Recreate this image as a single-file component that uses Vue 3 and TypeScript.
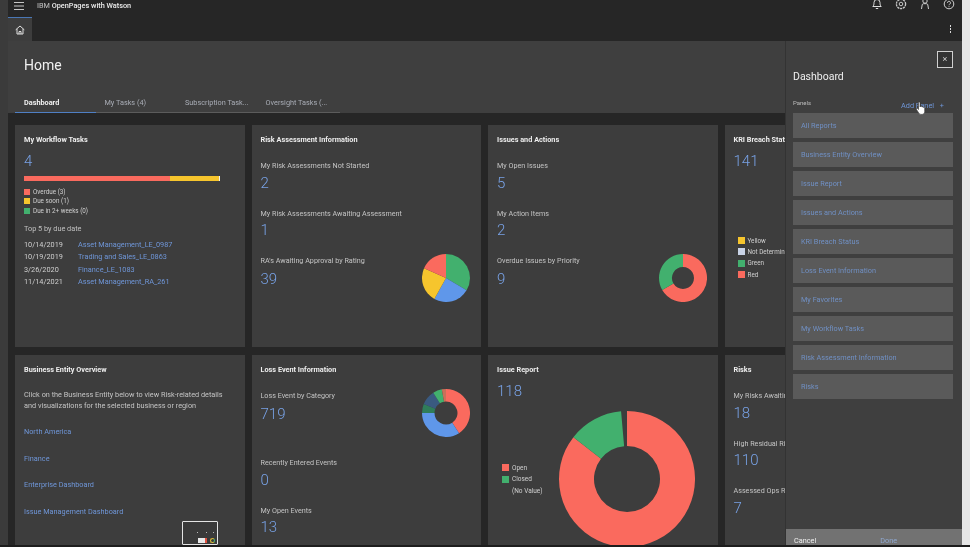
<script setup lang="ts">
interface Seg { from: number; to: number; color: string }

function pt(cx: number, cy: number, r: number, deg: number): string {
  const a = ((deg - 90) * Math.PI) / 180
  return `${(cx + r * Math.cos(a)).toFixed(2)} ${(cy + r * Math.sin(a)).toFixed(2)}`
}
function arc(c: number, ro: number, ri: number, s: Seg): string {
  const big = s.to - s.from > 180 ? 1 : 0
  if (ri === 0) return `M${c} ${c}L${pt(c, c, ro, s.from)}A${ro} ${ro} 0 ${big} 1 ${pt(c, c, ro, s.to)}Z`
  return `M${pt(c, c, ro, s.from)}A${ro} ${ro} 0 ${big} 1 ${pt(c, c, ro, s.to)}L${pt(c, c, ri, s.to)}A${ri} ${ri} 0 ${big} 0 ${pt(c, c, ri, s.from)}Z`
}

const red = '#fa6a5e'
const green = '#42b06e'
const blue = '#5f97ea'
const yellow = '#f6c52d'

const piePriority: Seg[] = [
  { from: 0, to: 121, color: green },
  { from: 121, to: 209, color: blue },
  { from: 209, to: 294, color: yellow },
  { from: 294, to: 360, color: red },
]
const donutOverdue: Seg[] = [
  { from: 0, to: 240, color: red },
  { from: 240, to: 360, color: green },
]
const donutLoss: Seg[] = [
  { from: 0, to: 147, color: red },
  { from: 147, to: 270, color: blue },
  { from: 270, to: 292, color: '#2f7d5a' },
  { from: 292, to: 328, color: '#3a5a80' },
  { from: 328, to: 350, color: green },
  { from: 350, to: 360, color: '#c9705a' },
]
const donutIssue: Seg[] = [
  { from: 0, to: 308, color: red },
  { from: 308, to: 355, color: green },
]

const bigPaths = donutIssue.map(s => ({ d: arc(68, 68, 33, s), color: s.color }))
const piePaths = piePriority.map(s => ({ d: arc(24, 24, 0, s), color: s.color }))
const overduePaths = donutOverdue.map(s => ({ d: arc(24, 24, 11, s), color: s.color }))
const lossPaths = donutLoss.map(s => ({ d: arc(24, 24, 11.5, s), color: s.color }))

const tabs = ['Dashboard', 'My Tasks (4)', 'Subscription Task...', 'Oversight Tasks (...']
const workflowLegend = [
  { label: 'Overdue (3)', color: red },
  { label: 'Due soon (1)', color: yellow },
  { label: 'Due in 2+ weeks (0)', color: green },
]
const dueRows = [
  { date: '10/14/2019', link: 'Asset Management_LE_0987' },
  { date: '10/19/2019', link: 'Trading and Sales_LE_0863' },
  { date: '3/26/2020', link: 'Finance_LE_1083' },
  { date: '11/14/2021', link: 'Asset Management_RA_261' },
]
const kriLegend = [
  { label: 'Yellow', color: yellow },
  { label: 'Not Determin', color: '#c9d3e6' },
  { label: 'Green', color: green },
  { label: 'Red', color: red },
]
const businessLinks = ['North America', 'Finance', 'Enterprise Dashboard', 'Issue Management Dashboard']
const panels = [
  'All Reports', 'Business Entity Overview', 'Issue Report', 'Issues and Actions', 'KRI Breach Status',
  'Loss Event Information', 'My Favorites', 'My Workflow Tasks', 'Risk Assessment Information', 'Risks',
]
</script>

<template>
  <div class="screen">
    <div class="strip"></div>
    <div class="main">
      <header class="topbar">
        <svg class="menu" width="10" height="8" viewBox="0 0 10 8"><path d="M0 .5h10M0 4h10M0 7.500h10" stroke="#c6c6c6" stroke-width="1.200"/></svg>
        <span class="brand">IBM <b>OpenPages with Watson</b></span>
        <div class="top-icons">
          <svg width="12" height="12" viewBox="0 0 12 12" fill="none" stroke="#dcdcdc"><path d="M1.800 8.500c1-1 1.200-2 1.200-4a3 3 0 0 1 6 0c0 2 .2 3 1.200 4zM4.800 10.500h2.400"/></svg>
          <svg width="12" height="12" viewBox="0 0 12 12" fill="none" stroke="#c8c8c8"><circle cx="6" cy="6" r="4.600" stroke-dasharray="2.200 .7" stroke-width="1.300"/><circle cx="6" cy="6" r="1.800"/></svg>
          <svg width="12" height="12" viewBox="0 0 12 12" fill="none" stroke="#d0d0d0"><circle cx="6" cy="3" r="2.200"/><path d="M2.500 11l.7-4.200a1.500 1.500 0 0 1 1.400-1.100h2.800a1.500 1.500 0 0 1 1.400 1.100l.7 4.200"/></svg>
          <svg width="12" height="12" viewBox="0 0 12 12" fill="none" stroke="#d0d0d0"><circle cx="6" cy="6" r="4.800"/><path d="M4.500 4.800a1.500 1.500 0 1 1 2.200 1.300c-.5.300-.7.600-.7 1.100M6 8.300v.8"/></svg>
        </div>
      </header>
      <div class="tabbar">
        <div class="home-tab">
          <svg width="10" height="10" viewBox="0 0 10 10" fill="none" stroke="#e0e0e0"><path d="M.7 4.800L5 1l4.300 3.800M2 4v5h6V4M4 9V6.500h2V9"/></svg>
        </div>
        <div class="kebab"><i></i><i></i><i></i></div>
      </div>
      <section class="page-head">
        <h1>Home</h1>
        <nav class="tabs">
          <span v-for="(t, i) in tabs" :key="t" class="tab" :class="{ active: i === 0 }">{{ t }}</span>
        </nav>
      </section>

      <div class="grid">
        <article class="card">
          <h2>My Workflow Tasks</h2>
          <div class="num first">4</div>
          <div class="bar"><span class="b-red"></span><span class="b-yellow"></span><span class="b-white"></span></div>
          <ul class="legend">
            <li v-for="l in workflowLegend" :key="l.label"><i :style="{ background: l.color }"></i>{{ l.label }}</li>
          </ul>
          <p class="top5">Top 5 by due date</p>
          <div v-for="r in dueRows" :key="r.date" class="due-row">
            <span class="date">{{ r.date }}</span><a>{{ r.link }}</a>
          </div>
        </article>

        <article class="card">
          <h2 class="before-metrics">Risk Assessment Information</h2>
          <div class="metric"><label>My Risk Assessments Not Started</label><div class="num">2</div></div>
          <div class="metric"><label>My Risk Assessments Awaiting Assessment</label><div class="num">1</div></div>
          <div class="metric with-chart">
            <div><label>RA's Awaiting Approval by Rating</label><div class="num">39</div></div>
            <svg class="mini" width="48" height="48" viewBox="0 0 48 48"><path v-for="p in piePaths" :key="p.d" :d="p.d" :fill="p.color"/></svg>
          </div>
        </article>

        <article class="card">
          <h2 class="before-metrics">Issues and Actions</h2>
          <div class="metric"><label>My Open Issues</label><div class="num">5</div></div>
          <div class="metric"><label>My Action Items</label><div class="num">2</div></div>
          <div class="metric with-chart">
            <div><label>Overdue Issues by Priority</label><div class="num">9</div></div>
            <svg class="mini" width="48" height="48" viewBox="0 0 48 48"><path v-for="p in overduePaths" :key="p.d" :d="p.d" :fill="p.color"/></svg>
          </div>
        </article>

        <article class="card">
          <h2 class="nowrap">KRI Breach Status</h2>
          <div class="num first">141</div>
          <ul class="legend kri">
            <li v-for="l in kriLegend" :key="l.label"><i :style="{ background: l.color }"></i>{{ l.label }}</li>
          </ul>
        </article>

        <article class="card">
          <h2>Business Entity Overview</h2>
          <p class="intro">Click on the Business Entity below to view Risk-related details and visualizations for the selected business or region</p>
          <a v-for="l in businessLinks" :key="l" class="biz-link">{{ l }}</a>
        </article>

        <article class="card">
          <h2 class="before-metrics">Loss Event Information</h2>
          <div class="metric with-chart tall">
            <div><label>Loss Event by Category</label><div class="num">719</div></div>
            <svg class="mini" width="48" height="48" viewBox="0 0 48 48"><path v-for="p in lossPaths" :key="p.d" :d="p.d" :fill="p.color"/></svg>
          </div>
          <div class="metric"><label>Recently Entered Events</label><div class="num">0</div></div>
          <div class="metric"><label>My Open Events</label><div class="num">13</div></div>
        </article>

        <article class="card">
          <h2>Issue Report</h2>
          <div class="num first">118</div>
          <div class="issue-body">
            <ul class="legend issue">
              <li><i :style="{ background: red }"></i>Open</li>
              <li><i :style="{ background: green }"></i>Closed</li>
              <li><i></i>(No Value)</li>
            </ul>
            <svg class="big" width="136" height="136" viewBox="0 0 136 136"><path v-for="p in bigPaths" :key="p.d" :d="p.d" :fill="p.color"/></svg>
          </div>
        </article>

        <article class="card">
          <h2 class="before-metrics nowrap">Risks</h2>
          <div class="metric"><label>My Risks Awaiting Assessment</label><div class="num">18</div></div>
          <div class="metric"><label>High Residual Risks</label><div class="num">110</div></div>
          <div class="metric"><label>Assessed Ops Risks</label><div class="num">7</div></div>
        </article>
      </div>
    </div>
    <div class="scrollbar"></div>

    <aside class="panel">
      <button class="close">×</button>
      <h3>Dashboard</h3>
      <div class="panel-head">
        <span class="panels-label">Panels</span>
        <span class="add">Add Panel <em>+</em></span>
      </div>
      <div class="panel-list">
        <div v-for="p in panels" :key="p" class="panel-item">{{ p }}</div>
      </div>
      <footer class="panel-foot"><span>Cancel</span><span class="done">Done</span></footer>
    </aside>

    <svg class="cursor" width="12" height="15" viewBox="0 0 12 15"><path d="M3.500 1.200c.8-.6 1.500 0 1.500.8v4l.5-.6c.8-.3 1.200 0 1.400.5.7-.3 1.200 0 1.400.5.8-.2 1.400.2 1.400 1v3c0 1.500-1 3-2.500 3H6c-1 0-1.700-.5-2.300-1.500L1.500 8.500c-.3-.8.4-1.400 1.200-1L3.500 8.500z" fill="#fff" stroke="#333" stroke-width=".6"/></svg>

    <div class="thumb">
      <i class="d1"></i><i class="d2"></i><i class="d3"></i>
      <span class="t-red"></span><span class="t-ring"></span>
    </div>
    <div class="edge"></div>
  </div>
</template>

<style>
html, body { margin: 0; background: #262626; overflow: hidden; }
</style>

<style scoped>
.screen {
  position: relative;
  display: flex;
  width: 970px;
  height: 547px;
  overflow: hidden;
  background: #262626;
  color: #d6d6d6;
  font-family: Roboto, "Noto Sans", sans-serif;
  font-size: 7.5px;
  filter: blur(0.35px);
}
.strip { width: 8px; flex: none; background: #3b3b3b; }
.main { width: 954px; flex: none; display: flex; flex-direction: column; overflow: hidden; }
.scrollbar { width: 8px; flex: none; background: #e6e6e6; }

.topbar { height: 17px; flex: none; background: #262626; display: flex; align-items: center; position: relative; }
.menu { margin: -6px 0 0 6px; }
.brand { margin: -7px 0 0 13px; font-size: 7.300px; color: #c4c4c4; }
.brand b { font-weight: 500; color: #ececec; }
.top-icons { position: absolute; right: 7px; top: -2px; display: flex; gap: 12px; }

.tabbar { height: 24px; flex: none; background: #262626; display: flex; justify-content: space-between; align-items: center; }
.home-tab { width: 24px; height: 24px; box-sizing: border-box; background: #3d3d3d; border-top: 1px solid #4a77b5; display: flex; align-items: center; justify-content: center; }
.kebab { display: flex; flex-direction: column; gap: 1.500px; margin-right: 11px; }
.kebab i { width: 1.500px; height: 1.500px; background: #d8d8d8; display: block; }

.page-head { height: 72px; flex: none; background: #3f3f3f; box-sizing: border-box; position: relative; }
.page-head h1 { margin: 0; padding: 16px 0 0 16px; font-size: 14px; line-height: 17px; font-weight: 400; color: #f0f0f0; }
.tabs { position: absolute; left: 7px; right: 0; bottom: 0; display: flex; height: 17px; }
.tabs::after { content: ""; position: absolute; left: 0; width: 325px; bottom: 0; height: 1px; background: #5c5c5c; }
.tab { width: 80.500px; box-sizing: border-box; padding-left: 9px; font-size: 7.300px; line-height: 14px; color: #a9adb6; white-space: nowrap; overflow: hidden; position: relative; z-index: 1; }
.tab.active { color: #f0f0f0; font-weight: 700; border-bottom: 1px solid #4f7fc4; }

.grid { flex: none; display: grid; grid-template-columns: repeat(4, 229.500px); grid-template-rows: 222px 190px; gap: 8px 7px; padding: 12px 0 0 7px; }
.card { background: #3d3d3d; padding: 10px 9px 0; box-sizing: border-box; overflow: hidden; min-width: 0; }
h2 { margin: 0 0 8px; font-size: 7.300px; line-height: 9px; font-weight: 700; color: #ededed; }
h2.before-metrics { margin-bottom: 17px; }
.nowrap { white-space: nowrap; }
.num { font-size: 15px; line-height: 18px; font-weight: 300; color: #78a2e6; }
.num.first { margin-top: 6px; }
.metric { height: 47.500px; }
.metric label { display: block; font-size: 7.200px; line-height: 9px; color: #c4c4c4; margin-bottom: 3.500px; }
.with-chart label { margin-bottom: 5px; }
.with-chart { display: flex; justify-content: space-between; }
.mini { margin: -2px 2px 0 0; flex: none; }
.tall { height: 67px; }

.bar { display: flex; height: 5px; width: 196px; margin-top: 6px; }
.b-red { width: 146px; background: #fa6a5e; }
.b-yellow { width: 49px; background: #f6c52d; }
.b-white { width: 1px; background: #f0f0f0; }
.legend { list-style: none; margin: 6px 0 0; padding: 0; font-size: 6.300px; color: #d0d0d0; }
.legend li { display: flex; align-items: center; height: 9.500px; white-space: nowrap; }
.legend i { width: 6px; height: 6px; margin-right: 3px; flex: none; }
.top5 { margin: 8px 0 6px; font-size: 7.300px; line-height: 9px; color: #c0c0c0; }
.due-row { display: flex; font-size: 7.300px; line-height: 12.500px; }
.date { width: 54px; color: #cfcfcf; }
a { color: #6f96d8; }
.kri { margin: 65px 0 0 4px; }
.kri li { height: 11.300px; }
.kri i { width: 7px; height: 7px; }

.intro { margin: 15px 0 0; font-size: 7.300px; line-height: 11px; color: #c4c4c4; width: 205px; }
.biz-link { display: block; font-size: 7.300px; line-height: 9px; margin-top: 17.600px; }
.biz-link:first-of-type { margin-top: 16px; }

.issue-body { display: flex; align-items: flex-start; margin-top: 11px; }
.legend.issue { margin: 51px 0 0 5px; font-size: 6.500px; width: 57px; flex: none; }
.legend.issue li { height: 11.500px; }
.legend.issue i { width: 7px; height: 7px; }
.big { flex: none; }

.panel { position: absolute; left: 785px; top: 41px; width: 177px; height: 504px; box-sizing: border-box; background: #3f3f3f; border-left: 1px solid #333; padding: 0 9px 0 7px; display: flex; flex-direction: column; }
.close { align-self: flex-end; margin-top: 10px; width: 16px; height: 17px; padding: 0; background: #333; border: 1px solid #d0d0d0; color: #d0d0d0; font-size: 9px; line-height: 13px; font-family: inherit; }
h3 { margin: 2px 0 0; font-size: 10.500px; line-height: 14px; font-weight: 400; color: #efefef; }
.panel-head { display: flex; justify-content: space-between; margin-top: 15px; height: 14px; }
.panels-label { font-size: 6px; line-height: 8px; color: #bdbdbd; }
.add { font-size: 7.300px; line-height: 12px; color: #6f96d8; margin: 1px 9px 0 0; }
.add em { font-style: normal; margin-left: 4px; }
.panel-list { display: flex; flex-direction: column; gap: 4px; }
.panel-item { height: 25px; box-sizing: border-box; padding-left: 8px; background: #5a5a5a; color: #7090c4; font-size: 7.300px; line-height: 25px; }
.panel-foot { position: absolute; left: 0; right: 0; bottom: 0; height: 16px; background: #727272; display: flex; font-size: 7.300px; line-height: 24px; padding-left: 8px; color: #f0f0f0; overflow: hidden; }
.done { margin-left: 64px; color: #8fa8d0; }

.cursor { position: absolute; left: 915px; top: 101px; }
.thumb { position: absolute; left: 182px; top: 521px; width: 34px; height: 22px; border: 1px solid #e4e4e4; background: #3a3a3a; border-radius: 1px; }
.thumb i { position: absolute; top: 10px; width: 1px; height: 1px; background: #bbb; }
.d1 { left: 14px; }
.d2 { left: 23px; }
.d3 { left: 30px; }
.t-red { position: absolute; left: 15px; top: 16px; width: 9px; height: 5px; background: #e8e8e8; border-right: 2px solid #e0503f; box-sizing: border-box; }
.t-ring { position: absolute; left: 27px; top: 16px; width: 5px; height: 5px; border: 1px solid #d4b637; border-right-color: #42b06e; border-radius: 50%; box-sizing: border-box; }
.edge { position: absolute; left: 0; right: 0; bottom: 0; height: 2px; background: #1d1d1d; }
</style>
